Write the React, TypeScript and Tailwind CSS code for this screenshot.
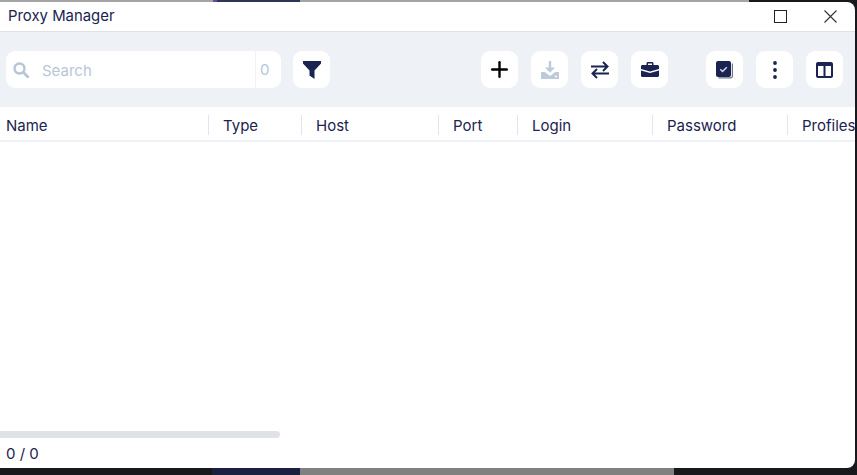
import React from 'react';
import { Plus } from 'lucide-react';

const columns = [
  { name: 'Name', width: 'w-[209px]', pad: 'pl-[6px]' },
  { name: 'Type', width: 'w-[93px]', pad: 'pl-[14px]' },
  { name: 'Host', width: 'w-[137px]', pad: 'pl-[14px]' },
  { name: 'Port', width: 'w-[79px]', pad: 'pl-[14px]' },
  { name: 'Login', width: 'w-[135px]', pad: 'pl-[14px]' },
  { name: 'Password', width: 'w-[135px]', pad: 'pl-[14px]' },
];

const ToolButton = ({ children }: { children: React.ReactNode }) => (
  <button className="w-[37px] h-[37px] bg-white rounded-[9px] flex items-center justify-center shrink-0">
    {children}
  </button>
);

const App = () => {
  return (
    <div className="w-[857px] h-[475px] flex flex-col overflow-hidden bg-[#17191c] font-['Inter',sans-serif] text-[#1b2350]">
      {/* Desktop behind the window, top */}
      <div className="flex h-[2px] shrink-0">
        <div className="w-[213px] bg-[#a5a5a5]"></div>
        <div className="w-[4px] bg-[#6b46a8]"></div>
        <div className="w-[83px] bg-[#2f3558]"></div>
        <div className="w-[449px] bg-[#a5a5a5]"></div>
        <div className="flex-1 bg-[#17191c]"></div>
      </div>

      <div className="w-[855px] h-[466px] shrink-0 bg-white rounded-tr-[8px] rounded-br-[8px] flex flex-col overflow-hidden">
        {/* Title bar */}
        <div className="h-[30px] shrink-0 flex items-center border-b border-[#dfe1e5] pl-[8px]">
          <span className="text-[14.9px] leading-none text-[#1b2350]">Proxy Manager</span>
          <div className="ml-auto flex items-center">
            <svg viewBox="0 0 13 13" className="w-[13px] h-[13px] mr-[37px]">
              <rect x="0.5" y="0.5" width="12" height="12" fill="none" stroke="#222222" strokeWidth="1" />
            </svg>
            <svg viewBox="0 0 13 13" className="w-[13px] h-[13px] mr-[18px]">
              <path d="M.5.5l12 12M12.500.5l-12 12" fill="none" stroke="#333333" strokeWidth="1.100" />
            </svg>
          </div>
        </div>

        {/* Toolbar */}
        <div className="h-[75px] shrink-0 bg-[#eef1f6] flex items-center pl-[6px]">
          <div className="w-[275px] h-[37px] bg-white rounded-[9px] flex items-center">
            <svg viewBox="0 0 16 16" className="w-[16px] h-[16px] ml-[7px]">
              <circle cx="6.500" cy="6.500" r="5" fill="none" stroke="#b7c5d6" strokeWidth="2.400" />
              <path d="M10.500 10.500L15 15" stroke="#b7c5d6" strokeWidth="2.800" strokeLinecap="round" />
            </svg>
            <span className="ml-[13px] flex-1 pt-[4px] text-[15px] text-[#b8c6d9]">Search</span>
            <div className="w-[26px] h-full border-l border-[#f0f2f6] pl-[4px] pt-[2px] flex items-center text-[15px] text-[#b8c6d9]">0</div>
          </div>
          <div className="ml-[12px]">
            <ToolButton>
              <svg viewBox="0 0 18 18" className="w-[18px] h-[18px]">
                <path d="M0 0h18v2.500L11.500 9.500V18L6.500 14.500v-5L0 2.500z" fill="#1b2350" />
              </svg>
            </ToolButton>
          </div>
          <div className="ml-[151px] flex gap-[13px]">
            <ToolButton>
              <Plus className="w-[25px] h-[25px] text-black" strokeWidth={2.3} />
            </ToolButton>
            <ToolButton>
              <svg viewBox="0 0 18 18" className="w-[18px] h-[18px]">
                <path d="M7.800 0h2.400v6.500H14L9 11.800 4 6.500h3.800z" fill="#bccad9" />
                <path d="M0 11h3.800l5.200 4 5.200-4H18v7H0z" fill="#bccad9" />
                <circle cx="15" cy="15.500" r="1" fill="#ffffff" />
              </svg>
            </ToolButton>
            <ToolButton>
              <svg viewBox="0 0 18 18" className="w-[18px] h-[18px]">
                <path d="M0 5.500h16.500M12 1l4.500 4.500L12 10M18 12.500H1.500M6 8l-4.500 4.500L6 17" fill="none" stroke="#1b2350" strokeWidth="2" />
              </svg>
            </ToolButton>
            <ToolButton>
              <svg viewBox="0 0 18 15" className="w-[18px] h-[15px]">
                <path d="M5.500 3V1.500C5.500.7 6.200 0 7 0h4c.8 0 1.500.7 1.500 1.500V3h4C17.300 3 18 3.700 18 4.500V7L9 9.500 0 7V4.500C0 3.700.7 3 1.500 3zM7 3h4V1.500H7z" fill="#1b2350" fillRule="evenodd" />
                <path d="M0 8.500L9 11l9-2.500v5c0 .8-.7 1.500-1.500 1.500h-15C.7 15 0 14.300 0 13.500z" fill="#1b2350" />
              </svg>
            </ToolButton>
          </div>
          <div className="ml-[38px] flex gap-[13px]">
            <ToolButton>
              <svg viewBox="0 0 17 18" className="w-[17px] h-[18px]">
                <path d="M15.800 2.500v12.500c0 .7-.6 1.300-1.300 1.300H2.500v1.200h12.300c1.200 0 2.200-1 2.200-2.200V2.500z" fill="#6d7391" />
                <rect x="0" y="0" width="15" height="16" rx="2" fill="#1b2350" />
                <path d="M4.300 8.300l2.200 2.200L10.800 6.300" fill="none" stroke="#d9dded" strokeWidth="1.400" />
              </svg>
            </ToolButton>
            <ToolButton>
              <svg viewBox="0 0 4 18" className="w-[4px] h-[18px]">
                <circle cx="2" cy="2" r="1.900" fill="#1b2350" />
                <circle cx="2" cy="9" r="1.900" fill="#1b2350" />
                <circle cx="2" cy="16" r="1.900" fill="#1b2350" />
              </svg>
            </ToolButton>
            <ToolButton>
              <svg viewBox="0 0 17 16" className="w-[17px] h-[16px]">
                <path d="M2 0h13c1.100 0 2 .9 2 2v12c0 1.100-.9 2-2 2H2c-1.100 0-2-.9-2-2V2C0 .9.900 0 2 0zm0 4v10h5.500V4zm7.500 0v10H15V4z" fill="#1b2350" fillRule="evenodd" />
              </svg>
            </ToolButton>
          </div>
        </div>

        {/* Table header */}
        <div className="h-[35px] shrink-0 pt-[3px] flex items-center border-b-2 border-[#eef1f6] text-[15px] overflow-hidden">
          {columns.map((col) => (
            <div key={col.name} className={`${col.width} ${col.pad} h-[20px] pt-[2px] shrink-0 flex items-center border-r border-[#e2e5ec]`}>
              {col.name}
            </div>
          ))}
          <div className="pl-[14px] pt-[2px] shrink-0">Profiles</div>
        </div>

        {/* Empty table body */}
        <div className="flex-1 flex flex-col justify-end">
          <div className="w-[280px] h-[7px] bg-[#dfe3e7] rounded-r-full"></div>
        </div>

        {/* Footer */}
        <div className="h-[30px] shrink-0 pl-[6px] pt-[6px] text-[15px] leading-[20px] text-[#1b2350]">0 / 0</div>
      </div>

      {/* Desktop behind the window, bottom */}
      <div className="flex flex-1">
        <div className="w-[212px] bg-[#17191c]"></div>
        <div className="w-[88px] bg-[#1b2040]"></div>
        <div className="w-[374px] bg-[#808080]"></div>
        <div className="flex-1 bg-[#17191c]"></div>
      </div>
    </div>
  );
};

export default App;
